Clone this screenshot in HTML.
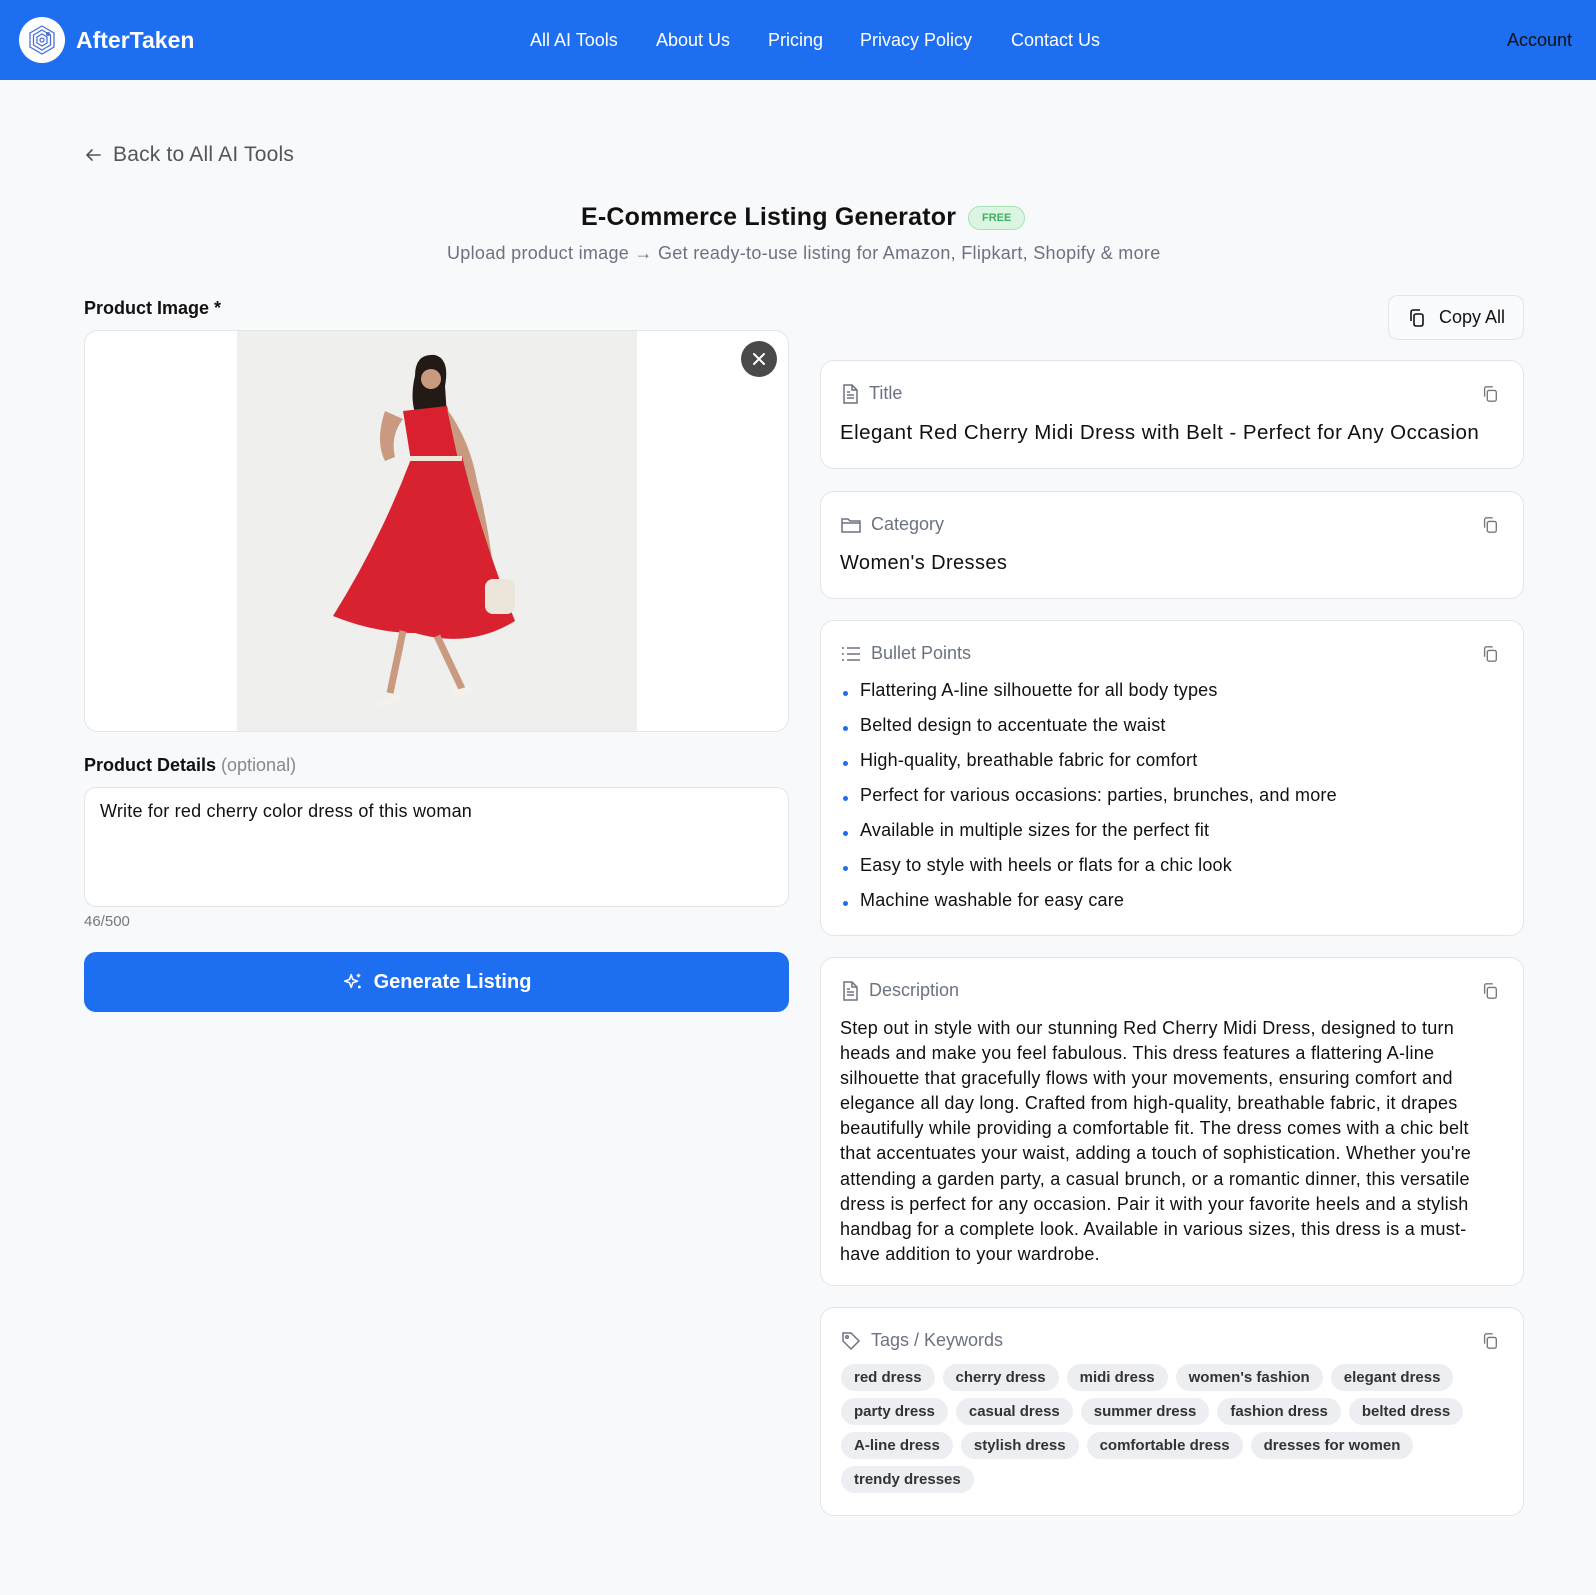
<!DOCTYPE html>
<html><head><meta charset="utf-8"><style>
*{box-sizing:border-box;margin:0;padding:0}
body{width:1596px;height:1595px;background:#f8f9fb;font-family:"Liberation Sans",Arial,sans-serif;color:#111;position:relative;overflow:hidden}
.hdr{position:absolute;left:0;top:0;width:1596px;height:80px;background:#1d6ef0}
.a{position:absolute;white-space:nowrap}
.nav{color:#fff;font-size:18px;top:30px}
.card{position:absolute;left:820px;width:704px;background:#fff;border:1px solid #e3e5e9;border-radius:14px}
.ch{position:absolute;left:20px;top:22px;font-size:18px;color:#6b7280;display:flex;align-items:center;gap:10px}
.cp{position:absolute;right:24px;top:24px}
.tags{position:absolute;left:20px;top:56px;width:640px;display:flex;flex-wrap:wrap;gap:7px 8px}
.tag{background:#eceef1;border-radius:14px;height:27px;line-height:27px;padding:0 13px;font-size:15px;font-weight:bold;color:#333}
ul{list-style:none}
li{position:relative;padding-left:20px;height:35px;font-size:18px;letter-spacing:0.2px}
li:before{content:"";position:absolute;left:3px;top:11px;width:5px;height:5px;border-radius:50%;background:#1d6ef0}
</style></head><body>
<div class="hdr">
<svg class="a" style="left:19px;top:17px" width="46" height="46" viewBox="0 0 46 46"><circle cx="23" cy="23" r="23" fill="#fff"/><g fill="none" stroke="#4a6fd8" stroke-width="1.3"><path d="M23 9l12 7v14l-12 7-12-7V16z"/><path d="M23 13l8.5 5v10l-8.5 5-8.5-5V18z"/><path d="M23 17l5 3v6l-5 3-5-3v-6z"/><circle cx="23" cy="23" r="2"/></g><circle cx="29" cy="17" r="2" fill="#4a6fd8"/></svg>
<div class="a" style="left:76px;top:27px;font-size:23px;font-weight:bold;color:#fff">AfterTaken</div>
<div class="a nav" style="left:530px">All AI Tools</div>
<div class="a nav" style="left:656px">About Us</div>
<div class="a nav" style="left:768px">Pricing</div>
<div class="a nav" style="left:860px">Privacy Policy</div>
<div class="a nav" style="left:1011px">Contact Us</div>
<div class="a" style="right:24px;top:30px;font-size:18px;color:#111">Account</div>
</div>
<svg class="a" style="left:84px;top:146px" width="18" height="18" viewBox="0 0 18 18" fill="none" stroke="#555" stroke-width="1.6" stroke-linecap="round"><path d="M16 9H3M8 4L3 9l5 5"/></svg>
<div class="a" style="left:113px;top:143px;font-size:21px;color:#555;letter-spacing:0.2px">Back to All AI Tools</div>
<div class="a" style="left:581px;top:203px;font-size:25px;font-weight:bold;letter-spacing:0.2px">E-Commerce Listing Generator</div>
<div class="a" style="left:968px;top:206px;height:24px;line-height:22px;padding:0 13px;border:1px solid #a7e3b5;background:#dcf5e2;color:#3fb060;font-size:11px;border-radius:12px;font-weight:bold">FREE</div>
<div class="a" style="left:447px;top:243px;font-size:18px;color:#6b7280;letter-spacing:0.3px">Upload product image → Get ready-to-use listing for Amazon, Flipkart, Shopify &amp; more</div>

<div class="a" style="left:84px;top:298px;font-size:18px;font-weight:bold">Product Image *</div>
<div class="a" style="left:84px;top:330px;width:705px;height:402px;background:#fff;border:1px solid #e3e5e9;border-radius:14px;overflow:hidden">
<svg width="705" height="402" style="position:absolute;left:0;top:0">
<rect x="152" y="0" width="400" height="402" fill="#efefed"/>
<path d="M300 80 Q290 110 300 130 L310 126 Q305 105 318 88Z" fill="#c99a80"/>
<circle cx="346" cy="47" r="13" fill="#c99a80"/>
<path d="M330 45 Q330 22 350 24 Q365 28 360 55 L362 85 L330 82 Q325 65 330 45Z" fill="#231a16"/>
<circle cx="346" cy="48" r="10" fill="#c99a80"/>
<path d="M318 80 L362 75 L375 125 L326 130Z" fill="#d8202e"/>
<path d="M362 78 Q385 110 392 150 Q405 200 410 255 L402 256 Q395 200 380 160 Z" fill="#c99a80"/>
<path d="M326 128 L377 125 Q395 200 430 290 Q385 318 330 302 Q290 302 248 285 Q295 210 326 128Z" fill="#d92230"/>
<rect x="325" y="125" width="52" height="5" fill="#eee4d8"/>
<path d="M318 300 L305 362 M352 305 L378 360" stroke="#c99a80" stroke-width="7"/>
<path d="M290 372 L318 362 L316 370 L290 376Z M368 360 L388 354 L385 362 L370 366Z" fill="#f4f1ea"/>
<rect x="400" y="248" width="30" height="35" rx="8" fill="#ece6da"/>
</svg>
<div style="position:absolute;left:656px;top:10px;width:36px;height:36px;border-radius:50%;background:#4a4a4a"><svg width="36" height="36" viewBox="0 0 36 36" stroke="#fff" stroke-width="2" stroke-linecap="round"><path d="M13 13l10 10M23 13l-10 10"/></svg></div>
</div>
<div class="a" style="left:84px;top:755px;font-size:18px;font-weight:bold">Product Details <span style="font-weight:normal;color:#888">(optional)</span></div>
<div class="a" style="left:84px;top:787px;width:705px;height:120px;background:#fff;border:1px solid #e3e5e9;border-radius:12px;padding:13px 15px;font-size:18px;letter-spacing:0.2px">Write for red cherry color dress of this woman</div>
<div class="a" style="left:84px;top:913px;font-size:15px;color:#777">46/500</div>
<div class="a" style="left:84px;top:952px;width:705px;height:60px;background:#1d6ef0;border-radius:12px;color:#fff;font-size:20px;font-weight:bold;display:flex;align-items:center;justify-content:center;gap:10px">
<svg width="22" height="22" viewBox="0 0 24 24" fill="none" stroke="#fff" stroke-width="1.7" stroke-linejoin="round"><path d="M10 4l1.8 5.2L17 11l-5.2 1.8L10 18l-1.8-5.2L3 11l5.2-1.8z"/><path d="M18 3v4M16 5h4M19 16v3M17.5 17.5h3"/></svg>Generate Listing</div>

<div class="a" style="left:1388px;top:295px;width:136px;height:45px;background:#fafbfc;border:1px solid #e3e5e9;border-radius:10px;display:flex;align-items:center;justify-content:center;gap:12px;font-size:18px">
<svg width="20" height="20" viewBox="0 0 20 20" fill="none" stroke="#111" stroke-width="1.6"><rect x="7" y="6" width="9" height="12" rx="2"/><path d="M4 13V4a2 2 0 0 1 2-2h7"/></svg>Copy All</div>

<div class="card" style="top:360px;height:109px">
<div class="ch"><svg width="18" height="20" viewBox="0 0 18 20" fill="none" stroke="#6b7280" stroke-width="1.5"><path d="M3 1h8l5 5v13H3z M11 1v5h5 M6 11h7 M6 14h7 M6 8h3"/></svg>Title</div>
<svg class="cp" width="18" height="18" viewBox="0 0 20 20" fill="none" stroke="#777" stroke-width="1.5"><rect x="7" y="6" width="10" height="12" rx="2"/><path d="M4 13V4a2 2 0 0 1 2-2h7"/></svg>
<div class="a" style="left:19px;top:60px;font-size:20.5px;letter-spacing:0.45px">Elegant Red Cherry Midi Dress with Belt - Perfect for Any Occasion</div>
</div>
<div class="card" style="top:491px;height:108px">
<div class="ch"><svg width="20" height="18" viewBox="0 0 20 18" fill="none" stroke="#6b7280" stroke-width="1.5"><path d="M1 3h6l2 2h10v11H1z M1 7h18"/></svg>Category</div>
<svg class="cp" width="18" height="18" viewBox="0 0 20 20" fill="none" stroke="#777" stroke-width="1.5"><rect x="7" y="6" width="10" height="12" rx="2"/><path d="M4 13V4a2 2 0 0 1 2-2h7"/></svg>
<div class="a" style="left:19px;top:60px;font-size:20px;letter-spacing:0.4px">Women's Dresses</div>
</div>
<div class="card" style="top:620px;height:316px">
<div class="ch"><svg width="20" height="18" viewBox="0 0 20 18" fill="none" stroke="#6b7280" stroke-width="1.5"><path d="M6 3h13M6 9h13M6 15h13M1 3h2M1 9h2M1 15h2"/></svg>Bullet Points</div>
<svg class="cp" width="18" height="18" viewBox="0 0 20 20" fill="none" stroke="#777" stroke-width="1.5"><rect x="7" y="6" width="10" height="12" rx="2"/><path d="M4 13V4a2 2 0 0 1 2-2h7"/></svg>
<ul class="a" style="left:19px;top:59px">
<li>Flattering A-line silhouette for all body types</li>
<li>Belted design to accentuate the waist</li>
<li>High-quality, breathable fabric for comfort</li>
<li>Perfect for various occasions: parties, brunches, and more</li>
<li>Available in multiple sizes for the perfect fit</li>
<li>Easy to style with heels or flats for a chic look</li>
<li>Machine washable for easy care</li>
</ul>
</div>
<div class="card" style="top:957px;height:329px">
<div class="ch"><svg width="18" height="20" viewBox="0 0 18 20" fill="none" stroke="#6b7280" stroke-width="1.5"><path d="M3 1h8l5 5v13H3z M11 1v5h5 M6 11h7 M6 14h7 M6 8h3"/></svg>Description</div>
<svg class="cp" width="18" height="18" viewBox="0 0 20 20" fill="none" stroke="#777" stroke-width="1.5"><rect x="7" y="6" width="10" height="12" rx="2"/><path d="M4 13V4a2 2 0 0 1 2-2h7"/></svg>
<div class="a" style="left:19px;top:58px;width:655px;white-space:normal;font-size:18px;line-height:25.1px;letter-spacing:0.25px">Step out in style with our stunning Red Cherry Midi Dress, designed to turn heads and make you feel fabulous. This dress features a flattering A-line silhouette that gracefully flows with your movements, ensuring comfort and elegance all day long. Crafted from high-quality, breathable fabric, it drapes beautifully while providing a comfortable fit. The dress comes with a chic belt that accentuates your waist, adding a touch of sophistication. Whether you're attending a garden party, a casual brunch, or a romantic dinner, this versatile dress is perfect for any occasion. Pair it with your favorite heels and a stylish handbag for a complete look. Available in various sizes, this dress is a must-have addition to your wardrobe.</div>
</div>
<div class="card" style="top:1307px;height:209px">
<div class="ch"><svg width="20" height="20" viewBox="0 0 20 20" fill="none" stroke="#6b7280" stroke-width="1.5"><path d="M2 2h8l8 8-8 8-8-8z"/><circle cx="6" cy="6" r="1.3"/></svg>Tags / Keywords</div>
<svg class="cp" width="18" height="18" viewBox="0 0 20 20" fill="none" stroke="#777" stroke-width="1.5"><rect x="7" y="6" width="10" height="12" rx="2"/><path d="M4 13V4a2 2 0 0 1 2-2h7"/></svg>
<div class="tags">
<span class="tag">red dress</span><span class="tag">cherry dress</span><span class="tag">midi dress</span><span class="tag">women's fashion</span><span class="tag">elegant dress</span>
<span class="tag">party dress</span><span class="tag">casual dress</span><span class="tag">summer dress</span><span class="tag">fashion dress</span><span class="tag">belted dress</span>
<span class="tag">A-line dress</span><span class="tag">stylish dress</span><span class="tag">comfortable dress</span><span class="tag">dresses for women</span><span class="tag">trendy dresses</span>
</div>
</div>
</body></html>
